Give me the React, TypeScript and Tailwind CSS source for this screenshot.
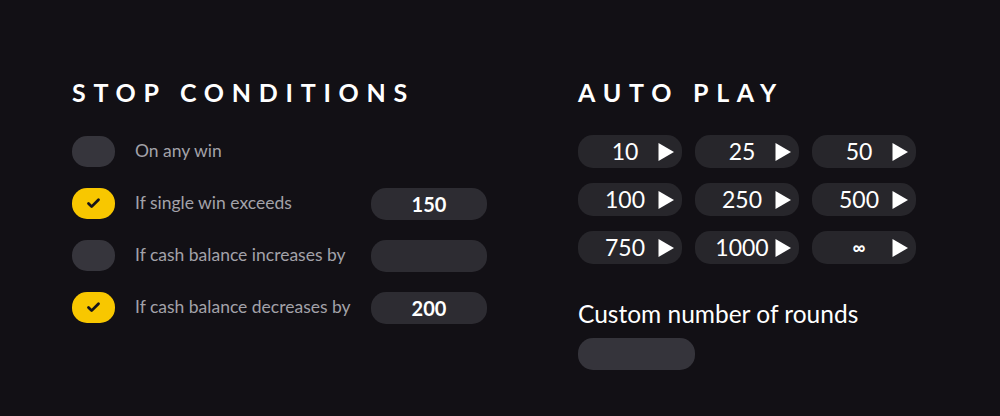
import { Check } from 'lucide-react';

type StopCondition = {
    label: string;
    enabled: boolean;
    value?: string;
    hasInput: boolean;
};

const conditions: StopCondition[] = [
    { label: 'On any win', enabled: false, hasInput: false },
    { label: 'If single win exceeds', enabled: true, value: '150', hasInput: true },
    { label: 'If cash balance increases by', enabled: false, value: '', hasInput: true },
    { label: 'If cash balance decreases by', enabled: true, value: '200', hasInput: true },
];

const rounds = ['10', '25', '50', '100', '250', '500', '750', '1000', '∞'];

function Toggle({ on }: { on: boolean }) {
    return (
        <div
            className={`flex h-[31px] w-[43px] shrink-0 items-center justify-center rounded-[15px] ${
                on ? 'bg-[#f8c700]' : 'bg-[#36353c]'
            }`}
        >
            {on && <Check className="h-[15px] w-[15px] text-[#16141a]" strokeWidth={4.5} />}
        </div>
    );
}

function PlayIcon() {
    return (
        <svg width="16" height="18" viewBox="0 0 16 18" className="shrink-0">
            <path d="M0.5 0 L16 9 L0.5 18 Z" fill="#ffffff" />
        </svg>
    );
}

export default function App() {
    return (
        <div
            className="flex h-[416px] w-[1000px] bg-[#121015] text-white"
            style={{ fontFamily: 'Lato, "Open Sans", sans-serif' }}
        >
            {/* Stop conditions column */}
            <section className="w-[506px] pl-[72px] pr-[19px] pt-[79px]">
                <h2 className="text-[25px] font-bold leading-[26px] tracking-[0.31em]">STOP CONDITIONS</h2>
                <div className="mt-[31px] flex flex-col gap-[21px]">
                    {conditions.map((c) => (
                        <div key={c.label} className="flex h-[31px] items-center">
                            <Toggle on={c.enabled} />
                            <span className="ml-[20px] flex-1 text-[17.5px] text-[#a3a2a9]">{c.label}</span>
                            {c.hasInput && (
                                <div className="flex h-[32px] w-[116px] items-center justify-center rounded-[15px] bg-[#2d2c32] text-[20px] font-bold">
                                    {c.value}
                                </div>
                            )}
                        </div>
                    ))}
                </div>
            </section>

            {/* Auto play column */}
            <section className="pl-[72px] pt-[79px]">
                <h2 className="text-[25px] font-bold leading-[26px] tracking-[0.31em]">AUTO PLAY</h2>
                <div className="mt-[30px] grid w-[338px] grid-cols-3 gap-x-[13px] gap-y-[15px]">
                    {rounds.map((r) => (
                        <button
                            key={r}
                            className="flex h-[33px] items-center rounded-[15px] bg-[#27262b] pl-[14px] pr-[8px]"
                        >
                            <span
                                className={`flex-1 text-center ${
                                    r === '∞' ? 'text-[18px] font-bold' : 'text-[23px] font-normal'
                                }`}
                            >
                                {r}
                            </span>
                            <PlayIcon />
                        </button>
                    ))}
                </div>
                <p className="mt-[36px] text-[24.5px] leading-[28px]">Custom number of rounds</p>
                <div className="mt-[10px] h-[32px] w-[117px] rounded-[15px] bg-[#35343b]" />
            </section>
        </div>
    );
}
